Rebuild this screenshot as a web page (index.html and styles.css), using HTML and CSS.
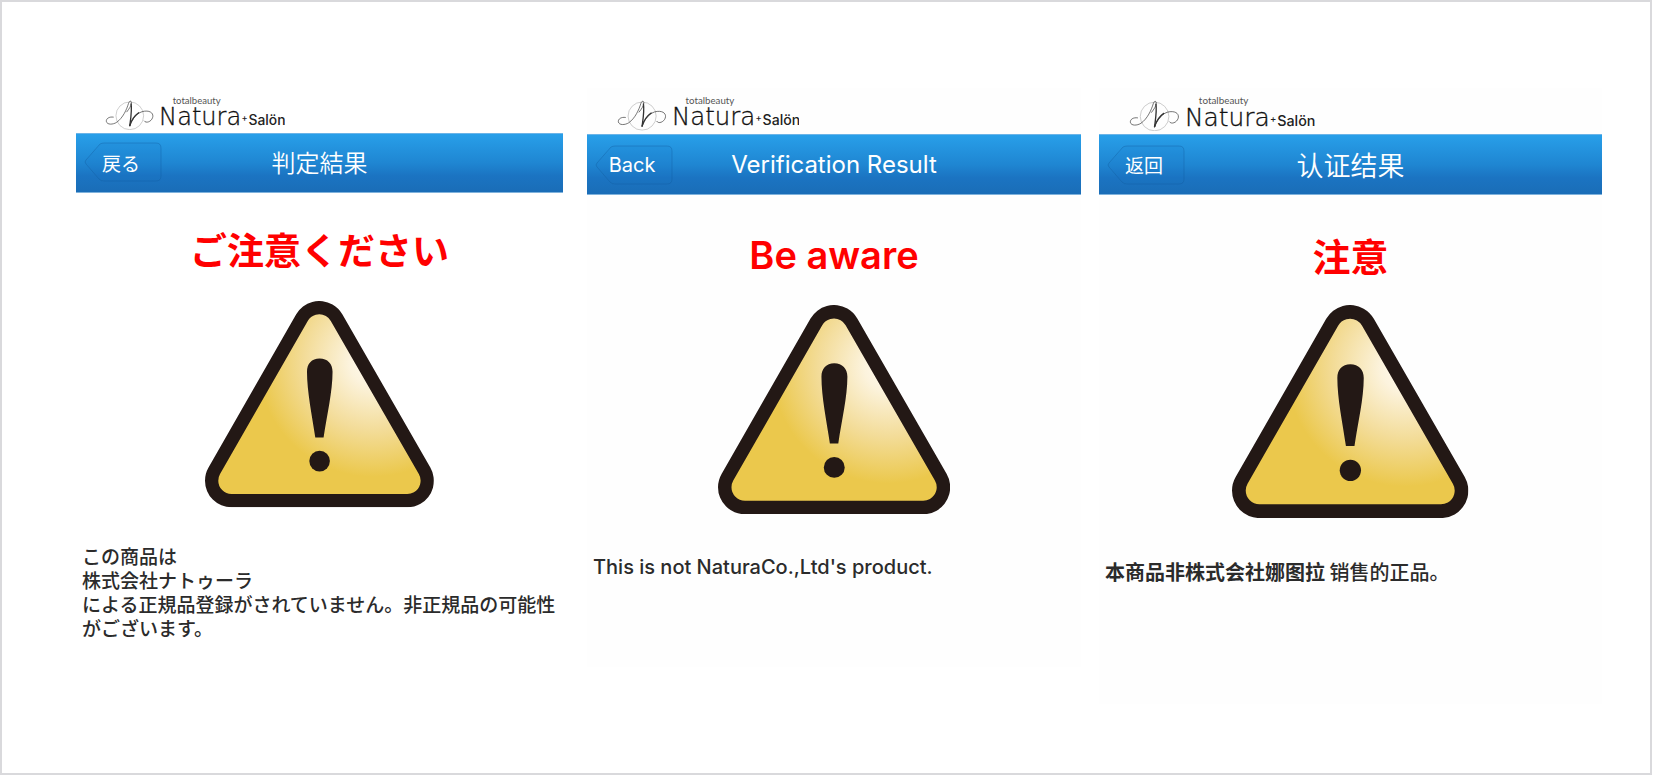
FILE: index.html
```html
<!DOCTYPE html>
<html lang="ja">
<head>
<meta charset="utf-8">
<meta name="viewport" content="width=device-width, initial-scale=1">
<title>Natura Verification Result</title>
<link rel="stylesheet" href="styles.css">
</head>
<body>
<svg class="defs" aria-hidden="true">
  <defs>
    <radialGradient id="shine" gradientUnits="userSpaceOnUse" cx="580" cy="440" r="345">
      <stop offset="0" stop-color="#fffaf0"/>
      <stop offset="0.2" stop-color="#fcf3dd"/>
      <stop offset="0.6" stop-color="#f3dc98"/>
      <stop offset="1" stop-color="#ebc84c"/>
    </radialGradient>
    <symbol id="warning" viewBox="76 256 689 621">
      <g stroke-linejoin="round">
        <path d="M156 797 420 336 685 797Z" fill="#231815" stroke="#231815" stroke-width="160"/>
        <path d="M156 797 420 336 685 797Z" fill="url(#shine)" stroke="url(#shine)" stroke-width="80"/>
      </g>
      <path d="M421 429c24 0 39 16 39 40 0 60-17 130-27 198h-25c-10-68-25-138-25-198 0-24 14-40 38-40Z" fill="#231815"/>
      <circle cx="421" cy="738" r="31" fill="#231815"/>
    </symbol>
    <symbol id="logo" viewBox="138 45 546 107">
      <circle cx="213" cy="108" r="42" fill="none" stroke="#b5b5b5" stroke-width="2"/>
      <g fill="none" stroke="#333" stroke-linecap="round" stroke-linejoin="round">
        <path d="M163 112C150 110 141 117 142 125C144 136 162 135 173 128C192 115 204 88 209 71C212 61 219 62 218 70C217 78 212 86 204 96" stroke-width="2"/>
        <path d="M217 72C220 92 216 115 213 138" stroke-width="4"/>
        <path d="M213 138C220 118 236 96 258 94C278 92 286 103 282 114C278 126 262 132 257 124" stroke-width="2"/>
        <path d="M213 138C218 122 227 108 240 99" stroke-width="4"/>
      </g>
      <text class="logo-tag" x="343" y="71">totalbeauty</text>
      <text class="logo-name" x="302" y="135">Natura</text>
      <text class="logo-plus" x="552" y="123">+</text>
      <text class="logo-salon" x="573" y="135">Salön</text>
    </symbol>
    <symbol id="arrow" viewBox="0 0 78 40" preserveAspectRatio="none">
      <path d="M16 2Q18 1 20 1H72Q77 1 77 6V34Q77 39 72 39H20Q17 39 15 37L2 22Q0 20 2 18Z" fill="#1b75c6" fill-opacity=".12" stroke="#125b9d" stroke-opacity=".38" stroke-width="1"/>
    </symbol>
  </defs>
</svg>

<main class="frame">
  <section class="panel panel-ja" lang="ja">
    <svg class="logo" role="img" aria-label="Natura Salön"><use href="#logo"/></svg>
    <header class="bar">
      <button class="back" type="button"><svg class="back-shape" aria-hidden="true"><use href="#arrow"/></svg><span class="back-label">戻る</span></button>
      <h1 class="title">判定結果</h1>
    </header>
    <h2 class="alert">ご注意ください</h2>
    <svg class="sign" role="img" aria-label="警告"><use href="#warning"/></svg>
    <p class="message">この商品は<br>株式会社ナトゥーラ<br>による正規品登録がされていません。非正規品の可能性がございます。</p>
  </section>

  <section class="panel panel-en" lang="en">
    <svg class="logo" role="img" aria-label="Natura Salön"><use href="#logo"/></svg>
    <header class="bar">
      <button class="back" type="button"><svg class="back-shape" aria-hidden="true"><use href="#arrow"/></svg><span class="back-label">Back</span></button>
      <h1 class="title">Verification Result</h1>
    </header>
    <h2 class="alert">Be aware</h2>
    <svg class="sign" role="img" aria-label="Warning"><use href="#warning"/></svg>
    <p class="message">This is not NaturaCo.,Ltd's product.</p>
  </section>

  <section class="panel panel-zh" lang="zh-CN">
    <svg class="logo" role="img" aria-label="Natura Salön"><use href="#logo"/></svg>
    <header class="bar">
      <button class="back" type="button"><svg class="back-shape" aria-hidden="true"><use href="#arrow"/></svg><span class="back-label">返回</span></button>
      <h1 class="title">认证结果</h1>
    </header>
    <h2 class="alert">注意</h2>
    <svg class="sign" role="img" aria-label="警告"><use href="#warning"/></svg>
    <p class="message"><span class="company">本商品非株式会社娜图拉</span> 销售的正品。</p>
  </section>
</main>
</body>
</html>
```

FILE: styles.css
```css
* {
  box-sizing: border-box;
}

body {
  margin: 0;
  background: #fff;
  color: #2b2b2b;
  font-family: Inter, "Noto Sans CJK JP", sans-serif;
}

.defs {
  position: absolute;
  width: 0;
  height: 0;
}

.frame {
  display: flex;
  align-items: flex-start;
  min-height: calc(100vh - 1px);
  margin: 0 2px 1px 0;
  padding: 86px 48px 24px 74px;
  border: 2px solid #d9d9dc;
}

.panel {
  display: flex;
  flex-direction: column;
  min-width: 0;
  padding: 7px 0 88px;
}

.panel-ja {
  flex: 487 1 0;
  margin-right: 24px;
  font-family: "Noto Sans CJK JP", sans-serif;
}

.panel-en {
  flex: 494 1 0;
  margin-right: 18px;
  background: #fefefe;
}

.panel-zh {
  flex: 503 1 0;
  padding-bottom: 120px;
  background: #fefefe;
  font-family: "Noto Sans CJK SC", sans-serif;
}

.logo {
  width: 37%;
  aspect-ratio: 546 / 107;
  margin: 0 0 3px 6%;
}

.logo-tag {
  font: 400 29px Lato, sans-serif;
  fill: #555;
}

.logo-name {
  font: 200 73px "DejaVu Sans", "DejaVu Sans Light", sans-serif;
  fill: #111;
  stroke: #111;
  stroke-width: 1px;
}

.logo-plus {
  font: 500 28px Inter, sans-serif;
  fill: #222;
}

.logo-salon {
  font: 500 42px Inter, sans-serif;
  fill: #222;
}

.bar {
  display: grid;
  grid-template-columns: 1fr auto 1fr;
  align-items: center;
  height: 61px;
  padding: 0 8px;
  border-top: 1px solid #6bb4e8;
  border-bottom: 1px solid #7fb2dc;
  background: linear-gradient(#289fe9, #1f86d2 50%, #1b74c2 72%, #1a6db7);
  color: #fff;
}

.panel-ja .bar {
  height: 60px;
  padding-bottom: 2px;
}

.panel-en .bar {
  padding-top: 2px;
}

.back {
  position: relative;
  justify-self: start;
  width: 78px;
  height: 40px;
  padding: 0 4px 0 0;
  border: 0;
  background: none;
  color: inherit;
  font: inherit;
  font-size: 19px;
  cursor: pointer;
}

.panel-en .back {
  font-size: 20px;
}

.back-shape {
  position: absolute;
  inset: 0;
  width: 100%;
  height: 100%;
}

.back-label {
  position: relative;
}

.title {
  margin: 0;
  font-size: 24px;
  font-weight: 350;
  line-height: 32px;
}

.panel-en .title {
  font-weight: 400;
}

.panel-zh .title {
  font-size: 27px;
}

.alert {
  margin: 40px 0 30px;
  color: #f00;
  font-size: 38px;
  font-weight: 600;
  line-height: 40px;
  text-align: center;
}

.panel-ja .alert {
  margin: 36px 0 32px;
  font-size: 37px;
}

.sign {
  align-self: center;
  width: 47%;
  aspect-ratio: 689 / 621;
}

.message {
  margin: 41px 0 0;
  padding: 0 0 0 6px;
  font-size: 20px;
  font-weight: 500;
  line-height: 24px;
}

.panel-ja .message {
  margin-top: 36px;
  font-size: 19px;
}

.company {
  font-weight: 700;
}
```
